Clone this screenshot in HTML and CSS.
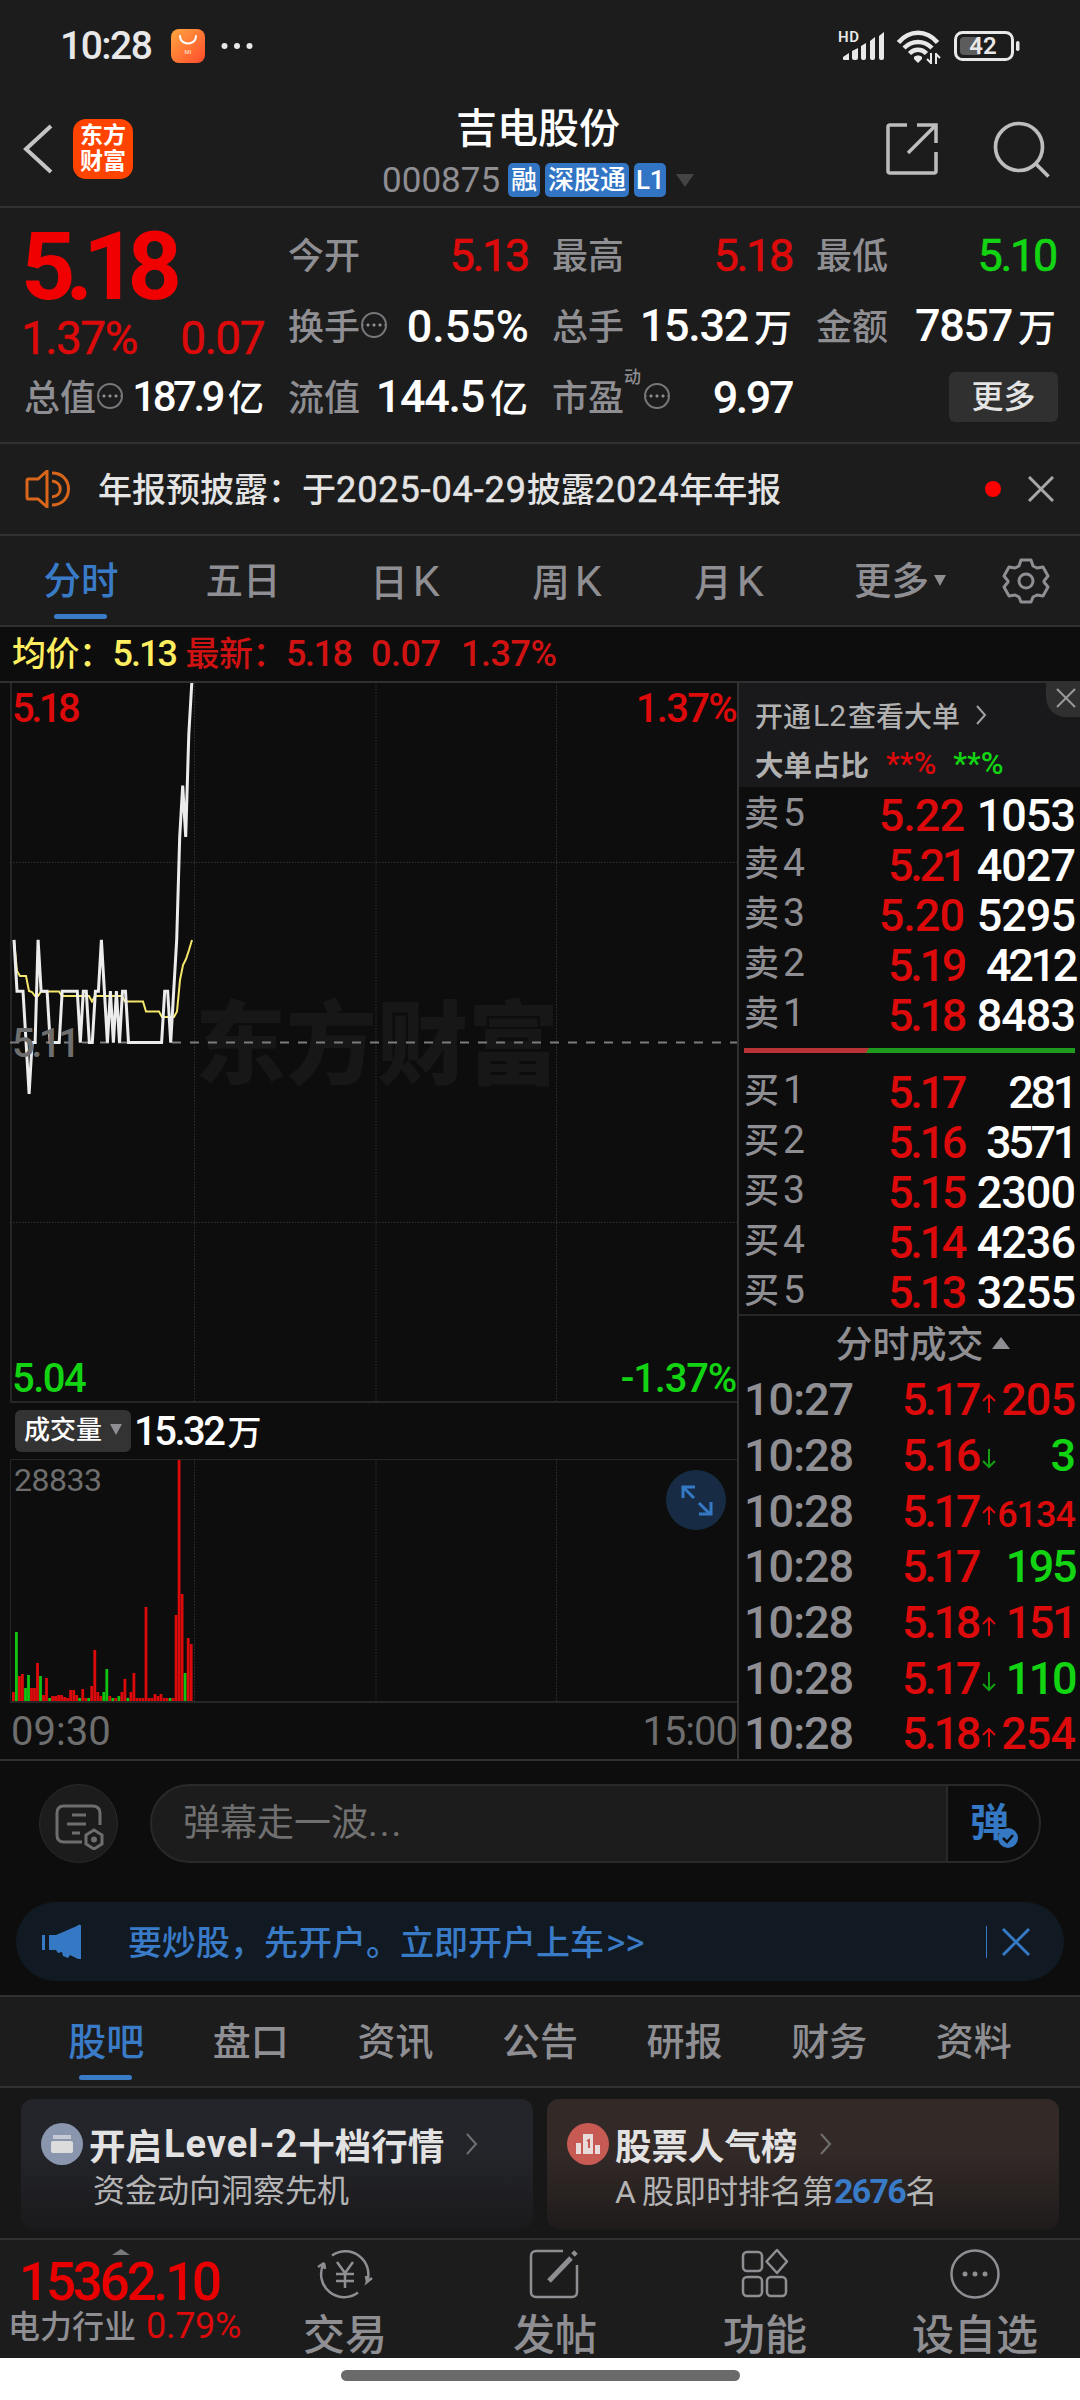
FILE: index.html
```html
<!DOCTYPE html>
<html lang="zh-CN">
<head>
  <meta charset="UTF-8" />
  <meta name="viewport" content="width=device-width, initial-scale=1.0" />
  <title>吉电股份 000875</title>
  <link rel="stylesheet" href="styles.css">
</head>
<body>
  <div class="status-bar">
    <span class="clock">10:28</span>
    <svg class="app-icon" width="34" height="34" viewBox="0 0 34 34">
      <defs><linearGradient id="og" x1="0" y1="0" x2="1" y2="1"><stop offset="0" stop-color="#ffa640"/><stop offset="1" stop-color="#ff4b2b"/></linearGradient></defs>
      <rect width="34" height="34" rx="8" fill="url(#og)"/>
      <path d="M9 7c0 10 16 10 16 0" fill="none" stroke="#fff" stroke-width="2" stroke-linecap="round"/>
      <text x="17" y="25" font-size="6" fill="#ffd9c0" text-anchor="middle">Mi</text>
    </svg>
    <svg width="32" height="8" viewBox="0 0 32 8" fill="#e8e8e8"><circle cx="3.5" cy="4" r="3"/><circle cx="16" cy="4" r="3"/><circle cx="28.5" cy="4" r="3"/></svg>
    <svg class="status-icons" width="184" height="36" viewBox="0 0 184 36" fill="#e8e8e8">
      <text x="0" y="14" font-size="15" font-weight="600" textLength="21">HD</text>
      <path d="M5 29l6-4v7H6q-1 0-1-1zM14 23l6-3v10q0 2-2 2h-2q-2 0-2-2zM23 18l5-3v15q0 2-2 2h-1q-2 0-2-2zM32 13l5-4v21q0 2-2 2h-1q-2 0-2-2zM41 8l5-4v26q0 2-2 2h-1q-2 0-2-2z"/>
      <g fill="none" stroke="#e8e8e8" stroke-width="4.5"><path d="M60.500 14.500c11-13 28-13 39 0"/><path d="M66 20c8-8 20-8 28 0"/><path d="M71.500 25.500c5-5 12-5 17 0"/></g>
      <path d="M76 29c2-2 6-2 8 0v2l-4 4-4-4z"/>
      <path d="M93 25v11M89 31l4 4M98 36V25M98 26l4 4" stroke="#e8e8e8" stroke-width="2" fill="none"/>
      <rect x="117.5" y="4.5" width="57" height="27" rx="7" fill="none" stroke="#e8e8e8" stroke-width="3"/>
      <path d="M126 9h16v18h-16a4 4 0 0 1-4-4v-10a4 4 0 0 1 4-4z" fill="#5c5c5c"/>
      <rect x="178" y="13" width="3.5" height="10" rx="1.7"/>
      <text x="145" y="26" font-size="24" font-weight="600" text-anchor="middle">42</text>
    </svg>
  </div>

  <header class="header">
    <svg width="30" height="50" viewBox="0 0 30 50" fill="none" stroke="#c4c4c4" stroke-width="4"><path d="M28 2L3 25L28 48"/></svg>
    <div class="logo">东方<br>财富</div>
    <div class="title">
      <h1>吉电股份</h1>
      <div class="code"><span class="num">000875</span><b>融</b><b>深股通</b><b>L1</b><i class="tri"></i></div>
    </div>
    <svg class="share" width="54" height="54" viewBox="0 0 54 54" fill="none" stroke="#bdbdbd" stroke-width="3.5"><path d="M22 3H5q-2 0-2 2v44q0 2 2 2h44q2 0 2-2V30"/><path d="M32 3h19v18M51 3L23 31"/></svg>
    <svg width="58" height="58" viewBox="0 0 58 58" fill="none" stroke="#bdbdbd" stroke-width="3.7"><circle cx="27" cy="27" r="23.5"/><path d="M43.500 43.500l13 13"/></svg>
  </header>

  <section class="quote">
    <div class="price">
      <strong>5.18</strong>
      <div><span>1.37%</span><span>0.07</span></div>
    </div>
    <div class="cell"><label>今开</label><span class="val red one">5.13</span></div>
    <div class="cell"><label>最高</label><span class="val red one">5.18</span></div>
    <div class="cell"><label>最低</label><span class="val green one">5.10</span></div>
    <div class="cell"><label>换手</label><i class="more-dot"></i><span class="val rate">0.55%</span></div>
    <div class="cell"><label>总手</label><span class="val wan">15.32<em>万</em></span></div>
    <div class="cell"><label>金额</label><span class="val wan">7857<em>万</em></span></div>
    <div class="cell"><label>总值</label><i class="more-dot"></i><span class="val small">187.9<em>亿</em></span></div>
    <div class="cell"><label>流值</label><span class="val wan">144.5<em>亿</em></span></div>
    <div class="cell"><label>市盈<sup>动</sup></label><i class="more-dot pe"></i><span class="val thin">9.97</span></div>
    <div class="cell"><button class="more-btn">更多</button></div>
  </section>

  <section class="notice">
    <svg width="48" height="42" viewBox="0 0 48 42" fill="none" stroke="#d9661a" stroke-width="3"><path d="M22 2v38M22 3l-9 8H3c-1 0-1 1-1 2v16c0 1 0 2 1 2h10l9 8"/><path d="M27 5c22 0 22 32 0 32M27 13c11 1 11 15 0 16"/></svg>
    <p>年报预披露：于<span>2025-04-29</span>披露<span>2024</span>年年报</p>
    <i class="red-dot"></i>
    <svg width="26" height="26" viewBox="0 0 26 26" stroke="#a8a8a8" stroke-width="3"><path d="M1 1l24 24M25 1L1 25"/></svg>
  </section>

  <nav class="period-tabs">
    <a class="active">分时</a><a>五日</a><a>日<span>K</span></a><a>周<span>K</span></a><a>月<span>K</span></a><a>更多<i class="tri"></i></a>
    <svg width="48" height="48" viewBox="0 0 48 48" fill="none" stroke="#8e8e93" stroke-width="3"><path d="M19 3h10l2 6 4 2 6-1 5 9-4 5v1l4 5-5 9-6-1-4 2-2 5H19l-2-5-4-2-6 1-5-9 4-5v-1l-4-5 5-9 6 1 4-2z" stroke-linejoin="round"/><circle cx="24" cy="24" r="7"/></svg>
  </nav>

  <div class="avg-line">
    <span class="yellow">均价：</span><span class="yellow n1">5.13</span><span>最新：</span><span class="n2">5.18</span><span class="n3">0.07</span><span class="n4">1.37%</span>
  </div>

  <main class="market">
    <div class="charts">
      <div class="plot">
        <span class="watermark">东方财富</span>
        <svg width="727" height="718" viewBox="0 0 727 718" fill="none">
          <path d="M184.5 0v718M366 0v718M546.5 0v718M0 179.5h727M0 539.5h727" stroke="#303030" stroke-dasharray="1.5 1.5"/>
          <path d="M0 359.5h727" stroke="#7c7c7c" stroke-width="2" stroke-dasharray="9 9"/>
          <polyline stroke="#f4e66a" stroke-width="2" transform="translate(1 -1)" points="3,258 6,289 9,294 15,294 18,309 21,310 24,314 27,314 30,309.5 48,309.5 51,314 78,314 81,319.5 84,314 111,314 114,319.5 132,319.5 135,329.5 148,329.5 151,335 163,335 166,329.5 169,298 172,283 175,277 178,268 181,258"/>
          <polyline id="priceLine" stroke="#ececec" stroke-width="3"/>
        </svg>
        <span class="lab top-left red">5.18</span>
        <span class="lab top-right red">1.37%</span>
        <span class="lab mid">5.11</span>
        <span class="lab bottom-left green">5.04</span>
        <span class="lab bottom-right green">-1.37%</span>
      </div>
      <div class="vol-head"><span class="chip">成交量<i class="tri"></i></span><span class="vol-num">15.32<em>万</em></span></div>
      <div class="volume">
        <svg width="727" height="241" viewBox="0 0 727 241">
          <path d="M184.5 0v241M366 0v241M546.5 0v241" stroke="#303030" stroke-dasharray="1.5 1.5"/>
          <g id="volBars"></g>
        </svg>
        <span class="vol-max">28833</span>
        <svg class="expand" width="60" height="60" viewBox="0 0 60 60" fill="none" stroke="#3578c4" stroke-width="3"><circle cx="30" cy="30" r="30" fill="#172c44" stroke="none"/><path d="M17 28V17h12M17 17l11 11M45 32v12H33M44 44L33 33"/></svg>
      </div>
      <div class="time-axis"><span>09:30</span><span>15:00</span></div>
    </div>

    <aside class="book">
      <div class="l2">
        <p>开通<u>L2</u>查看大单<svg width="12" height="20" viewBox="0 0 12 20" fill="none" stroke="#a0a0a0" stroke-width="2"><path d="M2 1l8 9-8 9"/></svg></p>
        <p><b>大单占比</b><span class="red">**%</span><span class="green">**%</span></p>
        <div class="close"><svg width="20" height="20" viewBox="0 0 20 20" stroke="#9a9a9a" stroke-width="2"><path d="M1 1l18 18M19 1L1 19"/></svg></div>
      </div>
      <ul class="levels sell">
        <li><label>卖<s>5</s></label><span>5.22</span><b>1053</b></li>
        <li><label>卖<s>4</s></label><span class="one">5.21</span><b>4027</b></li>
        <li><label>卖<s>3</s></label><span>5.20</span><b>5295</b></li>
        <li><label>卖<s>2</s></label><span class="one">5.19</span><b class="one">4212</b></li>
        <li><label>卖<s>1</s></label><span class="one">5.18</span><b>8483</b></li>
      </ul>
      <div class="ratio"></div>
      <ul class="levels buy">
        <li><label>买<s>1</s></label><span class="one">5.17</span><b class="one">281</b></li>
        <li><label>买<s>2</s></label><span class="one">5.16</span><b class="one">3571</b></li>
        <li><label>买<s>3</s></label><span class="one">5.15</span><b>2300</b></li>
        <li><label>买<s>4</s></label><span class="one">5.14</span><b>4236</b></li>
        <li><label>买<s>5</s></label><span class="one">5.13</span><b>3255</b></li>
      </ul>
      <div class="deal-title">分时成交<i></i></div>
      <ul class="deals" id="deals"></ul>
    </aside>
  </main>

  <section class="comment">
    <div class="round">
      <svg width="50" height="46" viewBox="0 0 50 46" fill="none" stroke="#6e6e6e" stroke-width="3"><path d="M27 38H9c-4 0-7-2-7-7V9c0-5 3-7 7-7h28c5 0 8 2 8 7v12"/><path d="M17 11h14M12 20h19M17 29h8"/><path d="M39 26l8 5v9l-8 5-8-5v-9z"/><circle cx="39" cy="35.5" r="1.5"/></svg>
    </div>
    <div class="input">
      <span>弹幕走一波<u>...</u></span>
      <div class="dan">弹<svg width="20" height="20" viewBox="0 0 20 20"><circle cx="10" cy="10" r="10" fill="#3578c4"/><path d="M5 10l4 4 6-7" fill="none" stroke="#0d0d0d" stroke-width="2.5"/></svg></div>
    </div>
  </section>

  <section class="banner">
    <svg width="42" height="36" viewBox="0 0 42 36" fill="#3578c4"><path d="M1 11h3v15H1zM8 11h7L36 2c1-1 4-2 4 0v33h-3l-8-4-2 3-5-2-1-4-4 1-2-3H8z"/></svg>
    <p>要炒股，先开户。立即开户上车<span>&gt;&gt;</span></p>
    <i></i>
    <svg width="30" height="30" viewBox="0 0 30 30" stroke="#3578c4" stroke-width="3"><path d="M2 2l26 26M28 2L2 28"/></svg>
  </section>

  <nav class="info-tabs">
    <a class="active">股吧</a><a>盘口</a><a>资讯</a><a>公告</a><a>研报</a><a>财务</a><a>资料</a>
  </nav>

  <section class="cards">
    <div class="card blue">
      <h3><svg class="ico" width="42" height="42" viewBox="0 0 42 42"><circle cx="21" cy="21" r="21" fill="#8a96ae"/><rect x="12" y="12" width="18" height="4" fill="#c4c9d3"/><rect x="10" y="18" width="22" height="12" rx="2" fill="#dcdcdc"/></svg>开启<span>Level-2</span>十档行情<svg class="arr" width="12" height="22" viewBox="0 0 12 22" fill="none" stroke="#707070" stroke-width="2"><path d="M1 1l9 10-9 10"/></svg></h3>
      <p>资金动向洞察先机</p>
    </div>
    <div class="card brown">
      <h3><svg class="ico" width="42" height="42" viewBox="0 0 42 42"><circle cx="21" cy="21" r="21" fill="#c85a54"/><path d="M9 20h5v11H9zM16 11h10v20H16zM28 22h5v9h-5z" fill="#e8dcda"/><path d="M20 18l2-1v8" stroke="#c85a54" stroke-width="2" fill="none"/></svg>股票人气榜<svg class="arr" width="12" height="22" viewBox="0 0 12 22" fill="none" stroke="#707070" stroke-width="2"><path d="M1 1l9 10-9 10"/></svg></h3>
      <p>A<span class="gap"></span>股即时排名第<b>2676</b>名</p>
    </div>
  </section>

  <footer class="bottom">
    <div class="index">
      <i></i>
      <strong>15362.10</strong>
      <p>电力行业<span>0.79%</span></p>
    </div>
    <a><svg width="60" height="52" viewBox="0 0 60 52" fill="none" stroke="#8e8e93" stroke-width="2.5"><path d="M17 7.5A23 23 0 0 1 52 34l5-4M52 34l-1-6"/><path d="M43 44.5A23 23 0 0 1 9 15l-6 4M9 15l1 6"/><path d="M22 14l8 11 8-11M30 25v15M21 26h18M21 33h18"/></svg>交易</a>
    <a><svg width="60" height="52" viewBox="0 0 60 52" fill="none" stroke="#8e8e93" stroke-width="2.5"><path d="M38 3H11c-3 0-5 2-5 5v36c0 3 2 5 5 5h36c3 0 5-2 5-5V17"/><path d="M46 10L24 33" stroke-width="5"/><path d="M48 7l3-3" stroke-width="5"/></svg>发帖</a>
    <a><svg width="60" height="52" viewBox="0 0 60 52" fill="none" stroke="#8e8e93" stroke-width="2.5"><rect x="8" y="4" width="19" height="19" rx="4"/><rect x="8" y="29" width="19" height="19" rx="4"/><rect x="32" y="29" width="19" height="19" rx="4"/><path d="M42 2l10 11.5L42 25 31.5 13.5z" stroke-linejoin="round"/></svg>功能</a>
    <a><svg width="60" height="52" viewBox="0 0 60 52" fill="none" stroke="#8e8e93" stroke-width="2.5"><circle cx="30" cy="26" r="23.5"/><g fill="#8e8e93" stroke="none"><circle cx="20" cy="26" r="2.5"/><circle cx="30" cy="26" r="2.5"/><circle cx="40" cy="26" r="2.5"/></g></svg>设自选</a>
  </footer>
  <div class="home-bar"><i></i></div>

  <script>
    // one value per minute since 09:30, in cents above 5.10
    const prices = [3,2,2,2,1,0,1,1,3,2,2,2,1,1,1,1,2,2,2,2,2,2,1,2,2,1,1,2,2,3,2,1,2,1,2,1,2,2,1,1,1,1,1,1,1,1,1,1,1,1,2,2,1,2,3,5,6,5,7,8];
    const step = 3.013;
    document.getElementById("priceLine").setAttribute("points",
      prices.map((p, i) => `${(4 + i * step).toFixed(1)},${(411 - p * 51.4).toFixed(1)}`).join(" "));

    // negative = green bar
    const vols = [9,-69,25,27,-13,-26,13,13,38,-25,6,23,-3,5,5,6,6,4,3,11,11,6,-3,12,3,-3,15,51,9,5,-9,-32,5,-3,3,-5,9,22,-3,9,28,3,3,3,94,3,3,7,5,7,3,3,-3,3,86,241,107,-28,63,57];
    document.getElementById("volBars").innerHTML = vols.map((v, i) => {
      const h = Math.abs(v);
      return `<rect x="${(2 + i * step).toFixed(1)}" y="${241 - h}" width="2.8" height="${h}" fill="${v < 0 ? "#12c412" : "#dc0a0a"}"/>`;
    }).join("");

    const deals = [
      ["10:27", "5.17", "up", "205", "red"],
      ["10:28", "5.16", "down", "3", "green"],
      ["10:28", "5.17", "up", "6134", "red sm"],
      ["10:28", "5.17", "", "195", "green one"],
      ["10:28", "5.18", "up", "151", "red one"],
      ["10:28", "5.17", "down", "110", "green one"],
      ["10:28", "5.18", "up", "254", "red"]
    ];
    const arrows = {
      up: '<path d="M7 20V2M1 8l6-6 6 6" stroke="#dc0a0a"/>',
      down: '<path d="M7 0v18M1 12l6 6 6-6" stroke="#12a012"/>',
      "": ""
    };
    document.getElementById("deals").innerHTML = deals.map(d =>
      `<li><time>${d[0]}</time><span>${d[1]}</span><svg width="14" height="21" viewBox="0 0 14 21" fill="none" stroke-width="2">${arrows[d[2]]}</svg><b class="${d[4]}">${d[3]}</b></li>`
    ).join("");
  </script>
</body>
</html>
```
FILE: styles.css
```css
* {
  box-sizing: border-box;
}

body {
  margin: 0;
  width: 1080px;
  height: 2400px;
  overflow: hidden;
  background: #0d0d0d;
  color: #fff;
  font-family: Roboto, "Noto Sans CJK SC", sans-serif;
  font-weight: 500;
}

i, em, s, u {
  font-style: normal;
  text-decoration: none;
}

svg {
  display: block;
  flex: none;
}

ul {
  list-style: none;
  margin: 0;
  padding: 0;
}

p, h1, h3 {
  margin: 0;
}

.red { color: #dc0a0a; }
.green { color: #12d412; }
.yellow { color: #ffee60; }

.tri {
  display: inline-block;
  border: 7px solid transparent;
  border-top: 12px solid #8e8e93;
  border-bottom: 0;
}

/* status bar + header */
.status-bar {
  height: 92px;
  padding: 0 60px;
  display: flex;
  align-items: center;
  background: #1c1c1c;
}

.clock {
  width: 111px;
  font-size: 39px;
  line-height: 92px;
  letter-spacing: -1.5px;
  color: #e8e8e8;
}

.app-icon {
  margin-right: 16px;
}

.status-icons {
  margin-left: auto;
  margin-right: -2px;
}

.header {
  height: 116px;
  padding: 0 30px 0 23px;
  display: flex;
  align-items: center;
  background: #1c1c1c;
  border-bottom: 2px solid #303030;
}

.logo {
  width: 60px;
  height: 60px;
  margin-left: 20px;
  padding-top: 4px;
  border-radius: 13px;
  background: #ff4400;
  font-size: 23px;
  font-weight: 700;
  line-height: 26px;
  text-align: center;
}

.title {
  flex: 1;
  margin-left: 58px;
  padding-top: 10px;
  text-align: center;
}

.title h1 {
  font-size: 41px;
  font-weight: 500;
  line-height: 52px;
}

.code {
  display: flex;
  justify-content: center;
  align-items: center;
  height: 50px;
}

.code .num {
  margin-right: 3px;
  font-size: 35px;
  font-weight: 400;
  color: #8e8e93;
}

.code b {
  height: 34px;
  margin-left: 5px;
  padding: 0 3px;
  border-radius: 5px;
  background: #3275c4;
  font-size: 26px;
  font-weight: 500;
  line-height: 34px;
}

.code b:nth-of-type(3) {
  padding: 0 2px;
  letter-spacing: -.5px;
}

.code .tri {
  margin-left: 10px;
  border-width: 13px 9px 0;
  border-top-color: #444;
}

.share {
  margin-right: 53px;
}

/* quote */
.quote {
  height: 236px;
  padding: 12px 24px 0;
  display: grid;
  grid-template-columns: repeat(4, 240px);
  grid-template-rows: repeat(3, 71px);
  column-gap: 24px;
  background: #1c1c1c;
  border-bottom: 2px solid #303030;
}

.price {
  grid-row: span 2;
  margin-left: -3px;
  color: #f00000;
}

.price strong {
  display: block;
  height: 93px;
  font-size: 95px;
  font-weight: 700;
  line-height: 94px;
  letter-spacing: -10px;
}

.price div {
  display: flex;
  justify-content: space-between;
  font-size: 46px;
  font-weight: 400;
  line-height: 50px;
  letter-spacing: -1.5px;
  color: #dc0a0a;
  -webkit-text-stroke: .5px;
}

.cell {
  display: flex;
  align-items: center;
  white-space: nowrap;
}

.cell label {
  position: relative;
  margin-top: -5px;
  font-size: 36px;
  color: #8e8e93;
}

.cell sup {
  position: absolute;
  top: -2px;
  left: 72px;
  font-size: 17px;
  line-height: 20px;
}

.more-dot {
  width: 26px;
  height: 26px;
  margin: -4px 0 0 1px;
  border: 2px solid #77777c;
  border-radius: 50%;
  background: radial-gradient(circle, #8e8e93 1.3px, transparent 1.8px) 2px 8px / 6px 6px repeat-x;
}

.more-dot.pe {
  margin-left: 20px;
}

.val {
  margin-left: auto;
  font-size: 45px;
  line-height: 60px;
  letter-spacing: -1.3px;
}

.val em {
  margin-left: 6px;
  font-size: 38px;
  letter-spacing: 0;
}

.val.red, .val.green {
  font-weight: 400;
  -webkit-text-stroke: .7px;
}

.val.rate {
  letter-spacing: 0;
  margin-right: -1px;
}

.val.one {
  letter-spacing: -2.3px;
}

.val.thin {
  letter-spacing: -2.5px;
}

.val.small {
  font-size: 42px;
  letter-spacing: -3.5px;
}

.val.small em {
  font-size: 36px;
}

.more-btn {
  width: 109px;
  height: 50px;
  margin: -2px -2px 0 auto;
  padding: 0;
  border: 0;
  border-radius: 6px;
  background: #303030;
  color: #e4e4e4;
  font: 500 32px/48px Roboto, "Noto Sans CJK SC", sans-serif;
}

/* notice */
.notice {
  height: 92px;
  padding: 0 26px 0 25px;
  display: flex;
  align-items: center;
  background: #1c1c1c;
  border-bottom: 2px solid #303030;
}

.notice p {
  flex: 1;
  margin: -4px 0 0 25px;
  font-size: 34px;
  color: #e4e4e4;
}

.notice p span {
  font-size: 36px;
  font-weight: 400;
  letter-spacing: .9px;
  -webkit-text-stroke: .5px;
}

.red-dot {
  width: 16px;
  height: 16px;
  margin-right: 27px;
  border-radius: 50%;
  background: #ff0000;
}

/* period tabs */
.period-tabs {
  height: 91px;
  display: flex;
  align-items: center;
  background: #1c1c1c;
  border-bottom: 2px solid #303030;
}

.period-tabs a {
  width: 162px;
  height: 89px;
  font-size: 37.5px;
  line-height: 91px;
  text-align: center;
  color: #8e8e93;
}

.period-tabs a span {
  margin-left: 5px;
  font-size: 43px;
  font-weight: 400;
}

.period-tabs .tri {
  margin-left: 5px;
  vertical-align: 8px;
  border-width: 11px 6px 0;
}

.period-tabs a:nth-child(6) {
  width: 180px;
}

.period-tabs svg {
  margin-left: 12px;
}

nav a.active {
  position: relative;
  color: #3a7bc8;
}

nav a.active::after {
  content: "";
  position: absolute;
  left: 50%;
  bottom: 6px;
  width: 53px;
  height: 5px;
  margin-left: -27px;
  border-radius: 3px;
  background: #3a7bc8;
}

.avg-line {
  height: 56px;
  padding-left: 12px;
  display: flex;
  font-size: 34px;
  line-height: 55px;
  letter-spacing: -.5px;
  color: #d01212;
  border-bottom: 2px solid #303030;
}

.avg-line .n1, .avg-line .n2, .avg-line .n3, .avg-line .n4 {
  font-size: 36px;
  letter-spacing: -1.5px;
}

.avg-line .n1 { width: 73px; letter-spacing: -2px; }
.avg-line .n2 { width: 85px; }
.avg-line .n3 { width: 90px; letter-spacing: -.5px; }
.avg-line .n4 { letter-spacing: -.5px; }

/* charts */
.market {
  height: 1078px;
  display: flex;
  border-bottom: 2px solid #303030;
}

.charts {
  width: 739px;
  padding-left: 10px;
  border-right: 2px solid #303030;
}

.plot {
  position: relative;
  height: 720px;
  border-left: 2px solid #262626;
  border-bottom: 2px solid #262626;
}

.plot svg {
  position: relative;
  margin-left: -2px;
}

.watermark {
  position: absolute;
  left: 183px;
  top: 299px;
  font-size: 91px;
  font-weight: 900;
  line-height: 128px;
  color: #171717;
}

.lab {
  position: absolute;
  font-size: 40px;
  line-height: 44px;
  letter-spacing: -3.5px;
}

.top-left { left: 0; top: 4px; }
.top-right { right: 1px; top: 4px; letter-spacing: -1.7px; }
.mid { left: 0; top: 339px; color: #6e6e6e; }
.bottom-left { left: 0; bottom: 0; letter-spacing: -1.5px; }
.bottom-right { right: 1px; bottom: 0; letter-spacing: -1.2px; }

.vol-head {
  height: 56px;
  padding-left: 5px;
  display: flex;
  align-items: center;
}

.chip {
  width: 116px;
  height: 42px;
  padding-left: 9px;
  border-radius: 6px;
  background: #333;
  font-size: 26px;
  line-height: 41px;
}

.chip .tri {
  margin-left: 8px;
  border-width: 11px 6px 0;
  vertical-align: 4px;
}

.vol-num {
  margin: -2px 0 0 3px;
  font-size: 40px;
  letter-spacing: -2.5px;
}

.vol-num em {
  margin-left: 4px;
  font-size: 34px;
}

.volume {
  position: relative;
  height: 244px;
  border: 2px solid #262626;
  border-width: 1px 0 2px 1px;
}

.volume svg {
  margin-left: -1px;
}

.vol-max {
  position: absolute;
  left: 3px;
  top: 0;
  font-size: 32px;
  font-weight: 400;
  line-height: 40px;
  letter-spacing: -.5px;
  color: #6e6e6e;
}

.volume .expand {
  position: absolute;
  right: 11px;
  top: 10px;
}

.time-axis {
  display: flex;
  justify-content: space-between;
  padding-left: 1px;
  font-size: 40px;
  font-weight: 400;
  line-height: 58px;
  color: #6e6e6e;
}

.time-axis span:last-child {
  letter-spacing: -1px;
}

/* order book */
.book {
  width: 341px;
}

.l2 {
  position: relative;
  height: 104px;
  padding: 8px 0 0 16px;
  background: #19191b;
  color: #b0b0b0;
}

.l2 p {
  display: flex;
  align-items: center;
  height: 48px;
  font-size: 28px;
}

.l2 u {
  margin: 0 2px;
  font-size: 30px;
  font-weight: 400;
}

.l2 p svg {
  margin-left: 15px;
}

.l2 p span {
  margin-left: 17px;
  font-size: 31px;
}

.l2 p b {
  font-size: 28.5px;
}

.close {
  position: absolute;
  right: 0;
  top: 0;
  width: 34px;
  height: 34px;
  padding: 5px 0 0 10px;
  border-bottom-left-radius: 20px;
  background: #303030;
}

.levels li {
  display: flex;
  align-items: center;
  height: 50px;
  padding: 0 5px;
}

.levels {
  padding-top: 3px;
}

.levels label {
  flex: 1;
  margin-top: -9px;
  font-size: 35px;
  color: #8e8e93;
}

.levels label s {
  margin-left: 4px;
  font-size: 39px;
  font-weight: 400;
}

.levels span {
  color: #dc0a0a;
  font-size: 45px;
  letter-spacing: -1px;
}

.levels b {
  width: 111px;
  text-align: right;
  font-size: 45px;
  font-weight: 500;
  letter-spacing: -1px;
}

.levels .one {
  letter-spacing: -3.3px;
}

.ratio {
  height: 5px;
  margin: 8px 5px 0;
  background: linear-gradient(120deg, #b83434 0 37.3%, #1e9a1e 37.5%);
}

.buy {
  padding-top: 14px;
}

.deal-title {
  display: flex;
  align-items: center;
  justify-content: center;
  height: 58px;
  margin-top: -3px;
  padding: 0 0 5px 26px;
  border-top: 2px solid #262626;
  font-size: 37px;
  color: #8e8e93;
}

.deal-title i {
  margin: 2px 0 0 8px;
  border: 9px solid transparent;
  border-top: 0;
  border-bottom: 12px solid #8e8e93;
}

.deals li {
  display: flex;
  align-items: center;
  height: 55.65px;
  padding: 0 5px;
  font-size: 45px;
}

.deals time {
  flex: 1;
  color: #8e8e93;
  letter-spacing: -1px;
}

.deals span {
  margin-right: 4px;
  color: #dc0a0a;
  letter-spacing: -3.3px;
}

.deals svg {
  margin-top: 8px;
}

.deals b {
  width: 79px;
  font-weight: 500;
  text-align: right;
  letter-spacing: -1px;
}

.deals .one {
  letter-spacing: -2.5px;
}

.deals .sm {
  padding-top: 8px;
  font-size: 36px;
}

/* comment + banner */
.comment {
  display: flex;
  justify-content: space-between;
  padding: 23px 39px 0 39px;
}

.round {
  width: 79px;
  height: 79px;
  padding: 19px 0 0 15px;
  border: 1px solid #2a2a2a;
  border-radius: 50%;
  background: #1c1c1c;
}

.input {
  width: 891px;
  height: 79px;
  display: flex;
  border: 2px solid #292929;
  border-radius: 40px;
  overflow: hidden;
  background: #1c1c1c;
}

.input span {
  flex: 1;
  padding-left: 31px;
  font-size: 37px;
  font-weight: 400;
  line-height: 76px;
  color: #707070;
}

.input u {
  letter-spacing: 2px;
}

.dan {
  position: relative;
  width: 93px;
  padding-left: 22px;
  border-left: 2px solid #292929;
  background: #0d0d0d;
  color: #3578c4;
  font-size: 39px;
  font-weight: 700;
  line-height: 74px;
}

.dan svg {
  position: absolute;
  left: 50px;
  top: 42px;
}

.banner {
  height: 79px;
  margin: 39px 16px 14px;
  padding: 0 33px 0 25px;
  display: flex;
  align-items: center;
  border-radius: 40px;
  background: #111a23;
  color: #3a7bc8;
}

.banner p {
  flex: 1;
  margin: -2px 0 0 45px;
  font-size: 34px;
}

.banner p span {
  margin-left: 2px;
  font-size: 37px;
  font-weight: 400;
}

.banner i {
  width: 1px;
  height: 32px;
  margin-right: 14px;
  background: #3578c4;
}

.info-tabs {
  height: 93px;
  padding: 0 34px;
  display: flex;
  border: 2px solid #303030;
  border-width: 2px 0;
  background: #1c1c1c;
}

.info-tabs a {
  flex: 1;
  font-size: 38px;
  line-height: 91px;
  text-align: center;
  color: #8e8e93;
}

/* cards */
.cards {
  height: 150px;
  padding: 11px 21px 0;
  display: flex;
  gap: 14px;
  background: #171717;
}

.card {
  flex: 1;
  height: 130px;
  padding: 22px 20px 0;
  border-radius: 12px;
}

.card.blue { background: linear-gradient(#24252a 40%, #1a1a1c); }
.card.brown { background: linear-gradient(#332a28 40%, #1f1b1b); }

.card h3 {
  display: flex;
  align-items: center;
  height: 46px;
  font-size: 36.5px;
  font-weight: 700;
  color: #e2e2e2;
}

.card h3 span {
  margin-left: 2px;
  font-size: 38px;
  letter-spacing: 1px;
}

.card .ico {
  margin-right: 6px;
}

.card .arr {
  margin-left: 22px;
}

.card p {
  padding-left: 52px;
  font-size: 32px;
  font-weight: 400;
  line-height: 49px;
  color: #b4b4b4;
}

.card.brown p {
  padding-left: 48px;
}

.card .gap {
  margin-left: 6px;
}

.card p b {
  color: #3a7bc8;
  font-size: 34px;
  letter-spacing: -1.7px;
}

/* bottom nav */
.bottom {
  height: 120px;
  display: flex;
  background: #1c1c1c;
  border-top: 2px solid #303030;
}

.index {
  width: 240px;
  padding-top: 9px;
  color: #dc0a0a;
}

.index i {
  display: block;
  width: 0;
  margin-left: 112px;
  border: 9px solid transparent;
  border-top: 0;
  border-bottom: 6px solid #77777c;
}

.index strong {
  display: block;
  padding-left: 19px;
  color: #e80000;
  font-size: 53px;
  font-weight: 500;
  line-height: 55px;
  letter-spacing: -3.2px;
}

.index p {
  padding-left: 8px;
  font-size: 32px;
  line-height: 32px;
  white-space: nowrap;
  color: #8e8e93;
}

.index p span {
  margin-left: 10px;
  font-size: 36px;
  font-weight: 400;
  letter-spacing: -.3px;
  color: #dc0a0a;
}

.bottom a {
  width: 210px;
  padding-top: 8px;
  display: flex;
  flex-direction: column;
  align-items: center;
  font-size: 42px;
  line-height: 72px;
  color: #8e8e93;
}

.home-bar {
  height: 42px;
  padding-top: 12px;
  background: #fff;
}

.home-bar i {
  display: block;
  width: 399px;
  height: 11px;
  margin: 0 auto;
  border-radius: 6px;
  background: #6a6a6a;
}
```
